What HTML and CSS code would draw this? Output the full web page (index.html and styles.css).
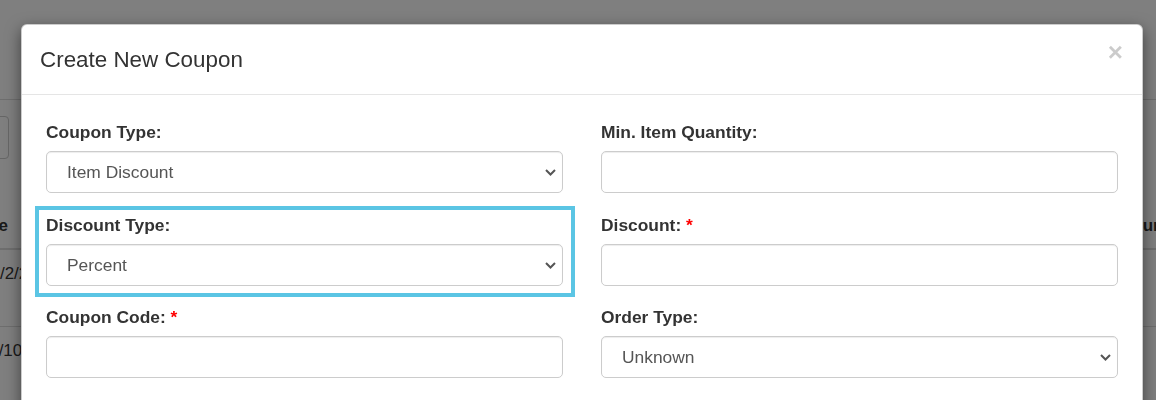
FILE: index.html
```html
<!DOCTYPE html>
<html lang="en">
<head>
  <meta charset="UTF-8">
  <meta name="viewport" content="width=device-width, initial-scale=1.0">
  <title>Coupons</title>
  <link rel="stylesheet" href="styles.css">
</head>
<body>
  <div class="page">
    <div class="topbar"></div>
    <div class="toolbar">
      <div class="toolbar-box"></div>
    </div>
    <table class="coupon-table">
      <colgroup>
        <col class="col-wide">
        <col class="col-wide">
        <col class="col-wide">
        <col class="col-mid">
        <col>
      </colgroup>
      <thead>
        <tr>
          <th>Date</th>
          <th>Code</th>
          <th>Type</th>
          <th>Discount</th>
          <th>Hours</th>
        </tr>
      </thead>
      <tbody>
        <tr>
          <td>12/2/2023</td>
          <td></td>
          <td></td>
          <td></td>
          <td></td>
        </tr>
        <tr>
          <td>11/10/2023</td>
          <td></td>
          <td></td>
          <td></td>
          <td></td>
        </tr>
      </tbody>
    </table>
  </div>

  <div class="backdrop"></div>

  <div class="modal-layer">
    <div class="modal">
      <div class="modal-header">
        <h4 class="modal-title">Create New Coupon</h4>
        <button class="close" type="button">&times;</button>
      </div>
      <div class="modal-body">
        <div class="form-grid">
          <div class="form-group">
            <label for="coupon-type">Coupon Type:</label>
            <div class="select-wrap">
              <select id="coupon-type" class="form-control">
                <option>Item Discount</option>
                <option>Order Discount</option>
              </select>
              <svg class="chevron" width="11" height="7" viewBox="0 0 11 7"><path d="M1 1 L5.5 5.5 L10 1" fill="none" stroke="#555" stroke-width="2"/></svg>
            </div>
          </div>
          <div class="form-group">
            <label for="min-qty">Min. Item Quantity:</label>
            <input id="min-qty" class="form-control" type="text">
          </div>

          <div class="form-group highlighted">
            <label for="discount-type">Discount Type:</label>
            <div class="select-wrap">
              <select id="discount-type" class="form-control">
                <option>Percent</option>
                <option>Amount</option>
              </select>
              <svg class="chevron" width="11" height="7" viewBox="0 0 11 7"><path d="M1 1 L5.5 5.5 L10 1" fill="none" stroke="#555" stroke-width="2"/></svg>
            </div>
          </div>
          <div class="form-group">
            <label for="discount">Discount:&nbsp;<span class="req">*</span></label>
            <input id="discount" class="form-control" type="text">
          </div>

          <div class="form-group">
            <label for="coupon-code">Coupon Code:&nbsp;<span class="req">*</span></label>
            <input id="coupon-code" class="form-control" type="text">
          </div>
          <div class="form-group">
            <label for="order-type">Order Type:</label>
            <div class="select-wrap">
              <select id="order-type" class="form-control">
                <option>Unknown</option>
                <option>Dine In</option>
                <option>Take Out</option>
              </select>
              <svg class="chevron" width="11" height="7" viewBox="0 0 11 7"><path d="M1 1 L5.5 5.5 L10 1" fill="none" stroke="#555" stroke-width="2"/></svg>
            </div>
          </div>
        </div>
      </div>
    </div>
  </div>
</body>
</html>
```

FILE: styles.css
```css
body {
  margin: 0;
  overflow: hidden;
  background: #fff;
  color: #333;
  font-family: "Liberation Sans", Arial, sans-serif;
  font-size: 17px;
  line-height: 24px;
}

/* page behind the modal */
.page {
  margin-left: -39px;
  width: 1300px;
}
.topbar {
  height: 99px;
  border-bottom: 1px solid #ddd;
}
.toolbar {
  padding-top: 16px;
}
.toolbar-box {
  width: 46px;
  height: 41px;
  border: 1px solid #ccc;
  border-radius: 4px;
}
.coupon-table {
  margin-top: 45px;
  width: 1300px;
  table-layout: fixed;
  border-collapse: collapse;
}
.col-wide {
  width: 300px;
}
.col-mid {
  width: 249px;
}
.coupon-table th {
  text-align: left;
  vertical-align: bottom;
  padding: 10px;
  border-bottom: 2px solid #ddd;
  white-space: nowrap;
}
.coupon-table td {
  height: 52px;
  vertical-align: top;
  padding: 12px 10px;
  border-top: 1px solid #ddd;
  white-space: nowrap;
}
.coupon-table td:first-child {
  padding-left: 20px;
}

.backdrop {
  position: fixed;
  inset: 0;
  background: rgba(0, 0, 0, 0.5);
}

/* modal */
.modal-layer {
  position: fixed;
  inset: 0;
  padding: 24px 0 0 21px;
}
.modal {
  width: 1122px;
  box-sizing: border-box;
  background: #fff;
  border: 1px solid rgba(0, 0, 0, 0.2);
  border-radius: 6px;
  box-shadow: 0 5px 15px rgba(0, 0, 0, 0.5);
}
.modal-header {
  display: flex;
  justify-content: space-between;
  align-items: flex-start;
  padding: 19px 19px 19px 18px;
  border-bottom: 1px solid #e5e5e5;
}
.modal-title {
  margin: 0;
  font-size: 22.4px;
  font-weight: normal;
  line-height: 31px;
  color: #333;
}
.close {
  padding: 0;
  margin-top: -5px;
  background: none;
  border: none;
  font-family: "Liberation Sans", Arial, sans-serif;
  font-size: 26px;
  font-weight: bold;
  line-height: 26px;
  color: #000;
  opacity: 0.2;
  cursor: pointer;
}
.modal-body {
  padding: 25px 24px 40px;
}
.form-grid {
  display: grid;
  grid-template-columns: 1fr 1fr;
  column-gap: 38px;
  row-gap: 19.5px;
}
.form-group {
  position: relative;
}
.form-group label {
  display: block;
  margin-bottom: 7px;
  font-size: 17.4px;
  font-weight: bold;
  line-height: 24px;
}
.req {
  color: #f00;
}
.form-control {
  display: block;
  width: 100%;
  height: 42px;
  box-sizing: border-box;
  padding: 0 20px;
  border: 1px solid #ccc;
  border-radius: 5px;
  background: #fff;
  color: #555;
  font-family: "Liberation Sans", Arial, sans-serif;
  font-size: 17.4px;
  box-shadow: inset 0 1px 1px rgba(0, 0, 0, 0.075);
}
select.form-control {
  appearance: none;
  -webkit-appearance: none;
}
.select-wrap {
  position: relative;
}
.chevron {
  position: absolute;
  right: 7px;
  top: 18px;
  pointer-events: none;
}

/* highlight drawn round the selected field */
.highlighted::after {
  content: "";
  position: absolute;
  top: -7px;
  left: -11px;
  right: -12px;
  bottom: -11.5px;
  border: 4px solid #5bc5e4;
  pointer-events: none;
}
```
